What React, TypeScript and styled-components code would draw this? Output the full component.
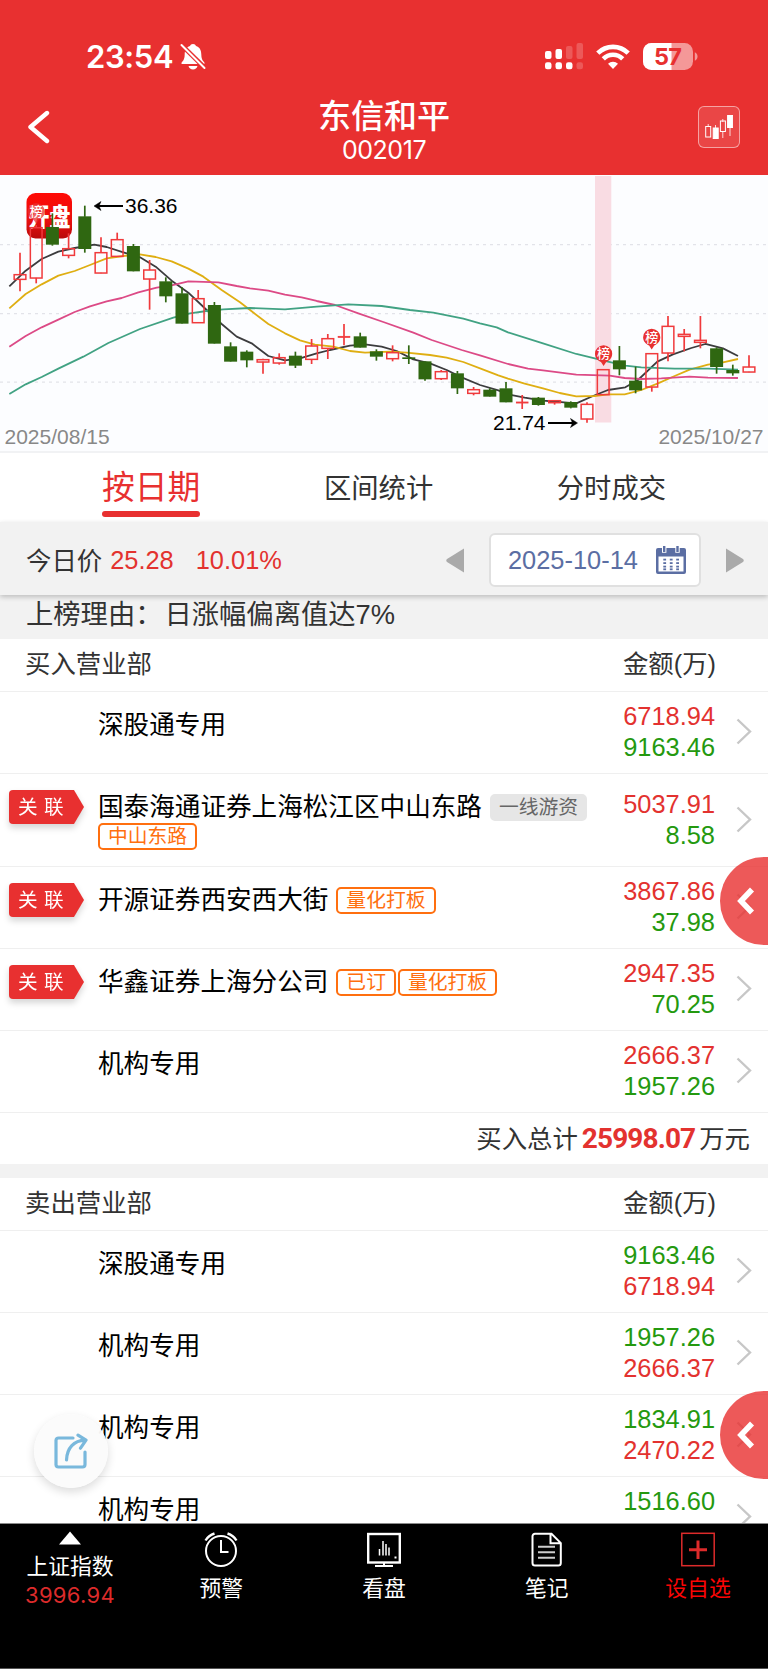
import React from 'react';
import styled, { createGlobalStyle } from 'styled-components';

const RED = '#e83030';
const UP = '#e3322f';
const DOWN = '#24990f';

const GlobalStyle = createGlobalStyle`
  * { box-sizing: border-box; }
  body {
    margin: 0;
    background: #fff;
    font-family: 'Liberation Sans', 'Noto Sans CJK SC', sans-serif;
    color: #333;
  }
`;

const Page = styled.div`
  display: flex;
  flex-direction: column;
  width: 768px;
  height: 1669px;
  overflow: hidden;
  position: relative;
  background: #fff;
`;

const Header = styled.header`
  height: 175px;
  flex: none;
  background: ${RED};
  color: #fff;
`;

const StatusBar = styled.div`
  height: 96px;
  padding: 37px 70px 0 86px;
  display: flex;
  justify-content: space-between;
  align-items: flex-start;
`;

const StatusGroup = styled.div<{ $gap: number }>`
  display: flex;
  align-items: center;
  height: 39px;
  gap: ${(p) => p.$gap}px;
`;

const Clock = styled.span`
  font: 600 31px/39px Inter, sans-serif;
  letter-spacing: -0.35px;
  width: 86px;
  white-space: nowrap;
`;

const TitleBar = styled.div`
  display: flex;
  align-items: flex-start;
  justify-content: space-between;
  padding: 0 28px;
`;

const BackIcon = styled.svg`
  margin: 14px 20px 0 -2px;
`;

const TitleBlock = styled.div`
  display: flex;
  flex-direction: column;
  align-items: center;
`;

const StockName = styled.h1`
  margin: 0;
  font: 500 33px/36px 'Noto Sans CJK SC', sans-serif;
`;

const StockCode = styled.span`
  margin-top: 5px;
  font: 400 25px/26px Inter, sans-serif;
  letter-spacing: -0.45px;
`;

const ChartButton = styled.button`
  margin-top: 10px;
  width: 42px;
  height: 42px;
  padding: 0;
  border: 1px solid rgba(255, 255, 255, 0.5);
  border-radius: 6px;
  background: rgba(255, 255, 255, 0.11);
  display: flex;
  align-items: center;
  justify-content: center;
`;

const ChartPanel = styled.section`
  height: 278px;
  flex: none;
  background: #fcfdff;
  border-bottom: 2px solid #f1f2f4;
  svg { display: block; }
`;

const Tabs = styled.nav`
  height: 69px;
  flex: none;
  padding: 0 102px;
  display: flex;
  justify-content: space-between;
`;

const Tab = styled.span`
  height: 64px;
  line-height: 71px;
  font-size: 27.3px;
`;

const ActiveTab = styled.span`
  display: flex;
  flex-direction: column;
  height: 64px;
  color: ${RED};
  font-size: 32.8px;
  line-height: 70px;
  &::after {
    content: '';
    flex: none;
    height: 6px;
    margin-top: -12px;
    border-radius: 3px;
    background: ${RED};
  }
`;

const DateBar = styled.section`
  height: 73px;
  flex: none;
  position: relative;
  z-index: 1;
  background: #f2f2f2;
  box-shadow: 0 2px 5px rgba(0, 0, 0, 0.22);
  display: flex;
  align-items: center;
  padding: 3px 24px 0 26px;
  font-size: 25.4px;
`;

const PriceLabel = styled.span`
  margin-top: -3px;
`;

const Price = styled.span<{ $gap: number }>`
  color: ${UP};
  margin-left: ${(p) => p.$gap}px;
`;

const DateNav = styled.div`
  display: flex;
  align-items: center;
  gap: 24px;
  margin-left: auto;
`;

const DateBox = styled.div`
  width: 212px;
  height: 54px;
  border: 2px solid #e0e0e0;
  border-radius: 6px;
  background: #fff;
  color: #5b6ea3;
  display: flex;
  align-items: center;
  justify-content: space-between;
  padding: 0 13px 0 17px;
`;

const Reason = styled.div`
  height: 44px;
  flex: none;
  background: #f2f2f2;
  padding-left: 26px;
  display: flex;
  gap: 2px;
  font-size: 27.3px;
  line-height: 39px;
`;

const List = styled.main`
  flex: 1;
  min-height: 0;
  overflow: hidden;
`;

const SectionHead = styled.div`
  height: 53px;
  border-bottom: 1px solid #efefef;
  padding: 0 52px 7px 25px;
  display: flex;
  align-items: center;
  justify-content: space-between;
  font-size: 25.4px;
`;

const Row = styled.div<{ $tall?: boolean }>`
  height: ${(p) => (p.$tall ? 93 : 82)}px;
  border-bottom: 1px solid #efefef;
  display: flex;
`;

const BadgeCell = styled.div`
  width: 98px;
  flex: none;
  padding: 16px 0 0 9px;
  filter: drop-shadow(0 4px 3px rgba(0, 0, 0, 0.16));
`;

const Badge = styled.div`
  width: 75px;
  height: 34px;
  padding-left: 9px;
  background: ${RED};
  border-radius: 4px 0 0 4px;
  clip-path: polygon(0 0, 65px 0, 100% 50%, 65px 100%, 0 100%);
  color: #fff;
  font-size: 19.6px;
  line-height: 34px;
  letter-spacing: 6.5px;
  white-space: nowrap;
`;

const Broker = styled.div`
  width: 495px;
  flex: none;
  padding-top: 19px;
  display: flex;
  flex-wrap: wrap;
  align-content: flex-start;
  align-items: center;
  gap: 1px 2px;
`;

const BrokerName = styled.span`
  font-size: 25.6px;
  line-height: 29px;
  margin-right: 6px;
  color: #000;
  white-space: nowrap;
`;

const Tag = styled.span<{ $muted?: boolean }>`
  height: 27px;
  padding: 0 ${(p) => (p.$muted ? 7 : 8)}px;
  border: 2px solid ${(p) => (p.$muted ? '#e6e6e6' : '#ff6f0f')};
  border-radius: 5px;
  background: ${(p) => (p.$muted ? '#e6e6e6' : '#fff')};
  color: ${(p) => (p.$muted ? '#666' : '#ff6f0f')};
  font-size: 19.8px;
  line-height: 22px;
`;

const Amounts = styled.div`
  flex: 1;
  display: flex;
  flex-direction: column;
  justify-content: center;
  align-items: flex-end;
  padding-bottom: 1px;
  font-size: 25.4px;
  line-height: 31px;
`;

const Amount = styled.span<{ $up: boolean }>`
  color: ${(p) => (p.$up ? UP : DOWN)};
`;

const RowArrow = styled.svg`
  flex: none;
  align-self: center;
  margin: 0 16px 2px 21px;
`;

const Total = styled.div`
  height: 51px;
  display: flex;
  align-items: center;
  justify-content: flex-end;
  padding: 0 18px 3px 0;
  font-size: 25.4px;
`;

const TotalValue = styled.strong`
  font: 700 28px/40px Roboto, sans-serif;
  letter-spacing: -0.9px;
  color: ${UP};
  margin: 3px 4px 0 4px;
`;

const Divider = styled.div`
  height: 14px;
  background: #f2f2f2;
`;

const SideHandle = styled.button<{ $top: number }>`
  position: absolute;
  z-index: 2;
  right: 0;
  top: ${(p) => p.$top}px;
  width: 48px;
  height: 88px;
  padding: 0 0 0 16px;
  border: 0;
  border-radius: 44px 0 0 44px;
  background: rgba(232, 48, 48, 0.8);
  display: flex;
  align-items: center;
`;

const ShareButton = styled.button`
  position: absolute;
  left: 34px;
  top: 1414px;
  width: 74px;
  height: 74px;
  padding: 0;
  border: 0;
  border-radius: 50%;
  background: rgba(251, 251, 251, 0.96);
  box-shadow: 0 4px 10px rgba(0, 0, 0, 0.14);
  display: flex;
  align-items: center;
  justify-content: center;
`;

const BottomNav = styled.nav`
  height: 146px;
  flex: none;
  background: #000;
  border-top: 1px solid #8a8a8a;
  border-bottom: 1px solid #555;
  color: #fff;
  display: flex;
`;

const NavItem = styled.div<{ $edge?: boolean; $hot?: boolean }>`
  ${(p) => (p.$edge ? 'width: 140px; flex: none;' : 'flex: 1;')}
  color: ${(p) => (p.$hot ? '#fa0505' : '#fff')};
  display: flex;
  flex-direction: column;
  align-items: center;
  padding-top: 8px;
  gap: 6px;
  font-size: 21.8px;
  line-height: 32px;
`;

const IndexItem = styled(NavItem)`
  padding-top: 7px;
  gap: 0;
  svg { margin-bottom: 6px; }
`;

const IndexValue = styled.span`
  margin-top: -1px;
  font: 400 22px/26px Inter, sans-serif;
  letter-spacing: 0.3px;
  color: #dc2b2b;
`;

type Candle = ['r' | 'g', number, number, number, number];

// direction, body top, body bottom, high, low
const candles: Candle[] = [
  ['r', 313, 329, 248, 364], ['r', 172, 325, 165, 340], ['g', 171, 224, 130, 227],
  ['r', 235, 257, 190, 265], ['g', 139, 237, 107, 248], ['r', 247, 310, 202, 310],
  ['r', 208, 260, 188, 260], ['g', 228, 304, 222, 304], ['r', 299, 328, 270, 419],
  ['g', 334, 379, 322, 397], ['g', 370, 461, 352, 461], ['r', 385, 459, 360, 459],
  ['g', 405, 521, 396, 521], ['g', 529, 575, 517, 575], ['g', 545, 571, 541, 592],
  ['r', 568, 577, 566, 611], ['r', 562, 580, 550, 584], ['g', 557, 587, 545, 594],
  ['r', 527, 569, 507, 582], ['r', 505, 536, 492, 567], ['r', 498, 502, 462, 526],
  ['g', 499, 533, 488, 533], ['g', 544, 560, 538, 572], ['r', 547, 567, 526, 574],
  ['g', 562, 567, 526, 582], ['g', 574, 628, 574, 632], ['r', 604, 627, 600, 630],
  ['g', 610, 655, 603, 672], ['r', 658, 671, 651, 676], ['g', 659, 680, 655, 680],
  ['g', 655, 697, 636, 697], ['r', 695, 700, 675, 717], ['g', 683, 705, 681, 707],
  ['r', 691, 699, 690, 704], ['g', 696, 713, 694, 715], ['r', 702, 748, 697, 758],
  ['r', 598, 675, 598, 675], ['g', 571, 598, 528, 616], ['g', 632, 661, 590, 670],
  ['r', 550, 652, 550, 665], ['r', 468, 550, 438, 574], ['r', 492, 500, 477, 544],
  ['r', 510, 518, 438, 535], ['g', 535, 591, 532, 611], ['g', 600, 610, 584, 617],
  ['r', 590, 607, 556, 607],
];

// Moving averages: x and y on a grid three times finer than the panel.
const averages: { color: string; points: string }[] = [
  {
    color: '#3c3c3e',
    points:
      '28,349 77,302 125,267 175,245 224,234 283,224 320,231 370,247 420,262 467,290 515,332 565,368 620,420 665,462 710,500 755,520 805,558 855,571 900,565 950,550 990,540 1050,527 1095,523 1145,530 1190,543 1240,568 1290,580 1340,600 1385,622 1440,645 1495,661 1524,673 1574,683 1629,692 1729,700 1779,678 1824,660 1876,652 1914,630 1972,575 2019,553 2074,534 2116,522 2169,535 2214,558',
  },
  {
    color: '#dfae12',
    points:
      '28,415 77,372 125,343 175,317 224,303 270,285 320,265 370,258 420,253 467,261 515,274 565,296 610,320 665,360 720,397 755,424 805,462 855,490 900,511 945,524 1000,530 1050,543 1095,548 1170,545 1220,548 1290,555 1340,563 1390,576 1450,599 1495,616 1524,626 1574,641 1629,655 1679,669 1729,679 1784,678 1824,673 1874,673 1924,660 1974,640 2024,618 2069,599 2124,584 2169,577 2214,567',
  },
  {
    color: '#dc4a86',
    points:
      '28,530 77,498 125,472 175,449 224,426 270,409 320,394 365,384 415,367 470,353 515,346 565,334 655,337 710,348 750,355 805,362 855,374 905,382 950,393 1005,405 1075,430 1150,456 1240,488 1295,510 1385,540 1440,556 1524,582 1584,596 1629,601 1729,614 1829,617 1874,624 1924,627 1984,625 2069,620 2124,623 2214,624',
  },
  {
    color: '#41a283',
    points:
      '28,672 77,643 125,621 175,596 250,560 325,519 420,477 520,443 570,430 620,423 670,418 750,414 855,418 950,410 1045,403 1145,408 1230,420 1300,428 1390,446 1440,460 1490,472 1524,487 1629,520 1729,552 1824,575 1876,587 1924,592 2024,596 2124,596 2214,599',
  },
];

const py = (v: number) => v / 3 - 5;

function Pin({ x, y, opacity = 1 }: { x: number; y: number; opacity?: number }) {
  return (
    <g transform={`translate(${x} ${y})`}>
      <path d="M-8.6 0a8.6 8.6 0 1 1 17.2 0c0 4.4-3.2 7-6 8.2L0 12.2l-2.6-4C-5.4 7-8.6 4.4-8.6 0z" fill={RED} opacity={opacity} />
      <text y="4.6" textAnchor="middle" fontSize="13" fontWeight="500" fill="#fff" fontFamily="'Noto Sans CJK SC', sans-serif">榜</text>
    </g>
  );
}

function KLine() {
  return (
    <svg width="768" height="276" viewBox="0 0 768 276" fontFamily="'Liberation Sans', sans-serif">
      <defs>
        <linearGradient id="logo" x1="0" y1="0" x2="0" y2="1">
          <stop offset="0" stopColor="#ff0a05" />
          <stop offset="0.6" stopColor="#e8100f" />
          <stop offset="1" stopColor="#b80a0a" />
        </linearGradient>
      </defs>
      {[69.7, 138.7, 207.2].map((y) => (
        <line key={y} x1="0" x2="768" y1={y} y2={y} stroke="#e2e3e9" strokeWidth="1.2" strokeDasharray="3 4" />
      ))}
      <rect x="26.5" y="18" width="45.5" height="45.5" rx="9" fill="url(#logo)" />
      <text transform="translate(28.5 50.5) scale(1 1.2)" fontSize="21" fontWeight="900" fill="#fff" fontFamily="'Noto Sans CJK SC', sans-serif">开盘</text>
      <rect x="595" y="1" width="16.3" height="246.5" fill="#f9dce3" />
      {averages.map((a) => (
        <polyline key={a.color} points={a.points} transform="translate(0 -5) scale(0.33333)" fill="none" stroke={a.color} strokeWidth="5.4" strokeLinejoin="round" />
      ))}
      {candles.map(([dir, top, bottom, high, low], i) => {
        const x = 20 + 16.2 * i;
        const red = dir === 'r';
        const color = red ? '#f03a3c' : '#2f6711';
        const inset = red ? 0.65 : 0;
        const thin = bottom - top < 6;
        return (
          <g key={i}>
            <line x1={x} x2={x} y1={py(high)} y2={py(top) + 0.5} stroke={color} strokeWidth="1.7" />
            <line x1={x} x2={x} y1={py(bottom) - 0.5} y2={py(low)} stroke={color} strokeWidth="1.7" />
            <rect
              x={x - 6.5 + inset}
              y={py(top) + inset - (red ? 0.3 : 0)}
              width={13 - 2 * inset}
              height={Math.max((bottom - top) / 3 - inset, 1)}
              fill={red && !thin ? 'none' : color}
              stroke={red ? color : 'none'}
              strokeWidth={thin ? 0.8 : 1.5}
            />
          </g>
        );
      })}
      <Pin x={36.2} y={36.5} opacity={0.75} />
      <Pin x={603.6} y={178.8} />
      <Pin x={651.7} y={162.3} />
      <g stroke="#000" strokeWidth="2" fill="#000">
        <path d="M97 31h26M548 248h26" />
        <path d="M94 31l7-4.5-2 4.5 2 4.5zM577.5 248l-7-4.5 2 4.5-2 4.5z" strokeWidth="0.5" />
      </g>
      <text x="125" y="38.3" fontSize="21" fill="#000">36.36</text>
      <text x="493" y="255" fontSize="21" fill="#000">21.74</text>
      <text x="4.5" y="268.8" fontSize="21" fill="#888">2025/08/15</text>
      <text x="763.5" y="268.8" fontSize="21" fill="#888" textAnchor="end">2025/10/27</text>
    </svg>
  );
}

function BellOff() {
  return (
    <svg width="26" height="28" viewBox="0 0 26 28">
      <path d="M13 1c1.6 0 2.6.9 3 2.1c3.7 1.1 5.3 4.4 5.3 8.4c0 4 1 5.8 2.7 7.4c.9.9.8 2.1-.7 2.1H2.7c-1.5 0-1.6-1.2-.7-2.1c1.7-1.6 2.7-3.4 2.7-7.4c0-4 1.6-7.3 5.3-8.4C10.4 1.9 11.4 1 13 1z" fill="#fff" />
      <path d="M8.5 23h9c-.6 2.2-2.3 3.6-4.5 3.6S9.1 25.2 8.5 23z" fill="#fff" />
      <path d="M1 1.5L25.5 25.5" stroke={RED} strokeWidth="4.6" />
      <path d="M1.5 2L24.5 25" stroke="#fff" strokeWidth="2" strokeLinecap="round" />
    </svg>
  );
}

function Signal() {
  const bars = [
    [0, 8, 8, 1], [10.5, 6, 10, 1], [21, 3, 13, 0.2], [31.5, 0, 16, 0.2],
  ];
  return (
    <svg width="38" height="27" viewBox="0 0 38 27" fill="#fff">
      {bars.map(([x, y, h, o], i) => (
        <g key={x}>
          <rect x={x} y={y} width="6.5" height={h} rx="2" opacity={o} />
          <rect x={x} y="19.3" width="6.5" height="7" rx="2.2" opacity={i === 3 ? 0.2 : 1} />
        </g>
      ))}
    </svg>
  );
}

function Wifi() {
  return (
    <svg width="34" height="26" viewBox="0 0 34 26">
      <g fill="none" stroke="#fff" strokeWidth="4.6">
        <path d="M1.8 9.2a21.5 21.5 0 0 1 30.4 0" />
        <path d="M7.3 14.8a13.7 13.7 0 0 1 19.4 0" />
      </g>
      <path d="M17 25l-5-5.2a7.3 7.3 0 0 1 10 0z" fill="#fff" />
    </svg>
  );
}

function Battery() {
  return (
    <svg width="55" height="27" viewBox="0 0 55 27">
      <defs>
        <clipPath id="cell"><rect width="50" height="27" rx="8.5" /></clipPath>
      </defs>
      <g clipPath="url(#cell)">
        <rect width="50" height="27" fill="#fff" opacity="0.5" />
        <rect width="28.5" height="27" fill="#fff" />
      </g>
      <path d="M51.8 9.3c1.8.8 2.7 2.2 2.7 4.2s-.9 3.4-2.7 4.2z" fill="#fff" opacity="0.5" />
      <text x="24.5" y="22" textAnchor="middle" fontFamily="Inter, sans-serif" fontWeight="700" fontSize="23.5" letterSpacing="-0.8" fill={RED}>57</text>
    </svg>
  );
}

function Calendar() {
  return (
    <svg width="30" height="28" viewBox="0 0 30 28" fill="#5b6ea3">
      <path d="M2 2h26a2 2 0 0 1 2 2v22a2 2 0 0 1-2 2H2a2 2 0 0 1-2-2V4a2 2 0 0 1 2-2zM2.5 10.5v15h25v-15z" fillRule="evenodd" />
      <path d="M8.2 0v6.8M21.5 0v6.8" stroke="#fff" strokeWidth="4.4" />
      <path d="M8.2 0v6M21.5 0v6" stroke="#5b6ea3" strokeWidth="2.4" />
      {[13.5, 17, 20.5, 23.2].map((y) => [7.3, 13.8, 20.2].map((x) => <rect key={`${x}-${y}`} x={x} y={y - 0.8} width="2.8" height="1.8" />))}
    </svg>
  );
}

interface BrokerRow {
  name: string;
  first: string;
  second: string;
  linked?: boolean;
  muted?: string;
  tags?: string[];
  tall?: boolean;
}

const buyers: BrokerRow[] = [
  { name: '深股通专用', first: '6718.94', second: '9163.46' },
  { name: '国泰海通证券上海松江区中山东路', first: '5037.91', second: '8.58', linked: true, muted: '一线游资', tags: ['中山东路'], tall: true },
  { name: '开源证券西安西大街', first: '3867.86', second: '37.98', linked: true, tags: ['量化打板'] },
  { name: '华鑫证券上海分公司', first: '2947.35', second: '70.25', linked: true, tags: ['已订', '量化打板'] },
  { name: '机构专用', first: '2666.37', second: '1957.26' },
];

const sellers: BrokerRow[] = [
  { name: '深股通专用', first: '9163.46', second: '6718.94' },
  { name: '机构专用', first: '1957.26', second: '2666.37' },
  { name: '机构专用', first: '1834.91', second: '2470.22' },
  { name: '机构专用', first: '1516.60', second: '774.06' },
];

function BrokerLine({ row, buying }: { row: BrokerRow; buying: boolean }) {
  return (
    <Row $tall={row.tall}>
      <BadgeCell>{row.linked && <Badge>关联</Badge>}</BadgeCell>
      <Broker>
        <BrokerName>{row.name}</BrokerName>
        {row.muted && <Tag $muted>{row.muted}</Tag>}
        {row.tags?.map((t) => <Tag key={t}>{t}</Tag>)}
      </Broker>
      <Amounts>
        <Amount $up={buying}>{row.first}</Amount>
        <Amount $up={!buying}>{row.second}</Amount>
      </Amounts>
      <RowArrow width="16" height="27" viewBox="0 0 16 27">
        <path d="M1.5 1.5L14 13.5L1.5 25.5" fill="none" stroke="#c7c7c7" strokeWidth="2.4" />
      </RowArrow>
    </Row>
  );
}

function HandleArrow() {
  return (
    <svg width="20" height="28" viewBox="0 0 20 28">
      <path d="M16 2.5L5 14l11 11.5" fill="none" stroke="#fff" strokeWidth="5.6" />
    </svg>
  );
}

export default function App() {
  return (
    <Page>
      <GlobalStyle />
      <Header>
        <StatusBar>
          <StatusGroup $gap={8}>
            <Clock>23:54</Clock>
            <BellOff />
          </StatusGroup>
          <StatusGroup $gap={13}>
            <Signal />
            <Wifi />
            <Battery />
          </StatusGroup>
        </StatusBar>
        <TitleBar>
          <BackIcon width="24" height="34" viewBox="0 0 24 34">
            <path d="M21 3L4.5 17L21 31" fill="none" stroke="#fff" strokeWidth="4.4" strokeLinecap="round" strokeLinejoin="round" />
          </BackIcon>
          <TitleBlock>
            <StockName>东信和平</StockName>
            <StockCode>002017</StockCode>
          </TitleBlock>
          <ChartButton>
            <svg width="28" height="26" viewBox="0 0 28 26" stroke="#fff" fill="none">
              <path d="M3.2 10v2M10.5 11v3M17.8 5v3M17.8 18v6M25 14v8" strokeOpacity="0.8" />
              <rect x="0.7" y="12.5" width="5" height="10.5" />
              <rect x="8.2" y="14" width="5" height="10.5" fill="#fff" />
              <rect x="15.4" y="7" width="5" height="10.5" />
              <rect x="22.6" y="1.5" width="5" height="12" fill="#fff" />
            </svg>
          </ChartButton>
        </TitleBar>
      </Header>

      <ChartPanel>
        <KLine />
      </ChartPanel>

      <Tabs>
        <ActiveTab>按日期</ActiveTab>
        <Tab>区间统计</Tab>
        <Tab>分时成交</Tab>
      </Tabs>

      <DateBar>
        <PriceLabel>今日价</PriceLabel>
        <Price $gap={8}>25.28</Price>
        <Price $gap={22}>10.01%</Price>
        <DateNav>
          <svg width="19" height="25" viewBox="0 0 19 25"><path d="M18 0.5v24L1 14q-1.5-1.5 0-3z" fill="#aaa" /></svg>
          <DateBox>
            <span>2025-10-14</span>
            <Calendar />
          </DateBox>
          <svg width="19" height="25" viewBox="0 0 19 25"><path d="M1 0.5v24L18 14q1.5-1.5 0-3z" fill="#aaa" /></svg>
        </DateNav>
      </DateBar>

      <Reason>
        <span>上榜理由：</span>
        <span>日涨幅偏离值达7%</span>
      </Reason>

      <List>
        <SectionHead>
          <span>买入营业部</span>
          <span>金额(万)</span>
        </SectionHead>
        {buyers.map((row) => <BrokerLine key={row.name} row={row} buying />)}
        <Total>
          买入总计<TotalValue>25998.07</TotalValue>万元
        </Total>
        <Divider />
        <SectionHead>
          <span>卖出营业部</span>
          <span>金额(万)</span>
        </SectionHead>
        {sellers.map((row) => <BrokerLine key={row.first} row={row} buying={false} />)}
      </List>

      <BottomNav>
        <IndexItem $edge>
          <svg width="22" height="14" viewBox="0 0 22 14"><path d="M11 0.5L22 13.5H0z" fill="#fff" /></svg>
          <span>上证指数</span>
          <IndexValue>3996.94</IndexValue>
        </IndexItem>
        <NavItem>
          <svg width="34" height="35" viewBox="0 0 34 35" fill="none" stroke="#fff" strokeWidth="2">
            <circle cx="17" cy="19" r="15" />
            <path d="M17 8v12h7.5" />
            <path d="M1.5 8.5q3-5 9-7M32.5 8.5q-3-5-9-7" strokeWidth="2.4" />
          </svg>
          <span>预警</span>
        </NavItem>
        <NavItem>
          <svg width="34" height="35" viewBox="0 0 34 35" fill="none" stroke="#fff" strokeWidth="2">
            <rect x="1.2" y="2" width="31.6" height="28.5" strokeWidth="2.4" />
            <path d="M12.5 17v6.5M16 9v14.5M19 12v11.5M22 15.5v8" strokeWidth="1.5" />
            <path d="M17 30v4M8 34h18M27.5 25.5h2" />
          </svg>
          <span>看盘</span>
        </NavItem>
        <NavItem>
          <svg width="34" height="35" viewBox="0 0 34 35" fill="none" stroke="#fff" strokeWidth="2">
            <path d="M5 1.8h16.5l9.3 9.3V31a2.5 2.5 0 0 1-2.5 2.5H5A2.5 2.5 0 0 1 2.5 31V4.3A2.5 2.5 0 0 1 5 1.8zM20.5 2v9.2h10" />
            <path d="M8 14.8h17M8 20.3h17M8 25.8h17" strokeOpacity="0.8" />
          </svg>
          <span>笔记</span>
        </NavItem>
        <NavItem $edge $hot>
          <svg width="34" height="35" viewBox="0 0 34 35" fill="none" stroke="#dd2b2b">
            <rect x="0.8" y="1.3" width="32.4" height="32.4" strokeWidth="1.5" />
            <path d="M17 8.5v18.5M8 17.8h18" strokeWidth="3" />
          </svg>
          <span>设自选</span>
        </NavItem>
      </BottomNav>

      <SideHandle $top={857}><HandleArrow /></SideHandle>
      <SideHandle $top={1391}><HandleArrow /></SideHandle>
      <ShareButton>
        <svg width="36" height="37" viewBox="0 0 36 37" fill="none" stroke="#79b8dc" strokeWidth="3.2" strokeLinecap="round" strokeLinejoin="round">
          <path d="M20 5H5.5A2.5 2.5 0 0 0 3 7.5v24A2.5 2.5 0 0 0 5.5 34h24a2.5 2.5 0 0 0 2.5-2.5V19" />
          <path d="M13.5 27C14 15 21 7.5 32 7.2M25 2.2l8 5-5.5 8" />
        </svg>
      </ShareButton>
    </Page>
  );
}
